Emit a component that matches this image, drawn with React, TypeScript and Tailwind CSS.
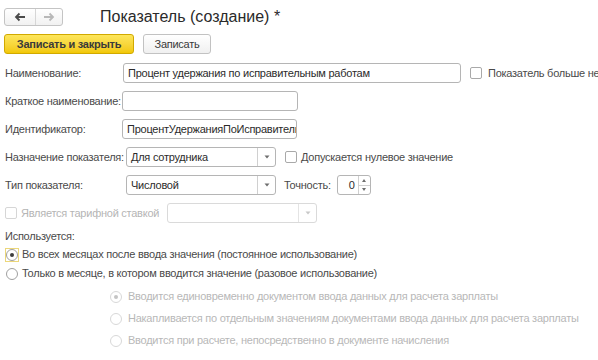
import React from "react";

const font = { fontFamily: '"Liberation Sans", Arial, sans-serif' };

function Arrow({ dir, color }: { dir: "left" | "right"; color: string }) {
    return (
        <svg width="12" height="10" viewBox="0 0 12 10">
            {dir === "left" ? (
                <path d="M11 5H2M5.5 1.5L2 5l3.5 3.5" stroke={color} strokeWidth="1.8" fill="none" />
            ) : (
                <path d="M1 5h9M6.5 1.5L10 5 6.5 8.5" stroke={color} strokeWidth="1.8" fill="none" />
            )}
        </svg>
    );
}

function Checkbox({ disabled }: { disabled?: boolean }) {
    return (
        <span
            className={
                "inline-block w-[12px] h-[12px] rounded-[2px] border bg-white shrink-0 " +
                (disabled ? "border-[#d6d6d6]" : "border-[#a9a9a9]")
            }
        />
    );
}

function Radio({ checked, disabled }: { checked?: boolean; disabled?: boolean }) {
    return (
        <span
            className={
                "flex items-center justify-center w-[12px] h-[12px] rounded-full border bg-white shrink-0 " +
                (disabled ? "border-[#d8d8d8]" : "border-[#a0a0a0]")
            }
        >
            {checked && (
                <span className={"w-[4px] h-[4px] rounded-full " + (disabled ? "bg-[#c4c4c4]" : "bg-[#3d3d3d]")} />
            )}
        </span>
    );
}

function Select({ value, width, disabled }: { value: string; width: string; disabled?: boolean }) {
    return (
        <div
            className={
                "flex h-[20px] rounded-[3px] border bg-white shrink-0 " +
                width +
                (disabled ? " border-[#dadada]" : " border-[#b5b5b5]")
            }
        >
            <div className="flex-1 pl-[4px] flex items-center text-[#2b2b2b] overflow-hidden whitespace-nowrap">
                {value}
            </div>
            <div
                className={
                    "w-[18px] flex items-center justify-center border-l " +
                    (disabled ? "border-[#e4e4e4]" : "border-[#d0d0d0]")
                }
            >
                <svg width="6" height="4" viewBox="0 0 6 4">
                    <path d="M0.5 0.5h5L3 3.5z" fill={disabled ? "#c8c8c8" : "#6e6e6e"} />
                </svg>
            </div>
        </div>
    );
}

export default function App() {
    return (
        <div
            className="w-[598px] h-[360px] bg-white overflow-hidden text-[11px] tracking-[-0.25px] text-[#4a4a4a]"
            style={font}
        >
            {/* Header */}
            <div className="flex items-center pt-[8px] pl-[4px] h-[26px]">
                <div className="flex h-[18px] w-[59px] rounded-[3px] border border-[#c4c4c4] bg-gradient-to-b from-white to-[#f1f1f1]">
                    <div className="w-[31px] flex items-center justify-center border-r border-[#d6d6d6]">
                        <Arrow dir="left" color="#4a4a4a" />
                    </div>
                    <div className="flex-1 flex items-center justify-center">
                        <Arrow dir="right" color="#b8b8b8" />
                    </div>
                </div>
                <div className="ml-[37px] text-[16px] tracking-normal text-[#2a2a2a] leading-none">
                    Показатель (создание) *
                </div>
            </div>

            {/* Command bar */}
            <div className="flex items-center pl-[4px] mt-[8px] h-[20px]">
                <button className="h-[20px] w-[130px] rounded-[3px] border border-[#d1a900] bg-gradient-to-b from-[#fde65a] to-[#f2c800] text-[11px] font-bold text-[#3a3a3a] leading-none">
                    Записать и закрыть
                </button>
                <button className="ml-[9px] h-[20px] w-[68px] rounded-[3px] border border-[#c2c2c2] bg-gradient-to-b from-white to-[#f0f0f0] text-[11px] text-[#3a3a3a] leading-none">
                    Записать
                </button>
            </div>

            {/* Fields */}
            <div className="pl-[5px] mt-[9px] flex flex-col gap-[8px]">
                <div className="flex items-center h-[20px]">
                    <div className="w-[118px] shrink-0">Наименование:</div>
                    <div className="w-[338px] shrink-0 h-[20px] rounded-[3px] border border-[#b5b5b5] flex items-center pl-[4px] text-[#2b2b2b] whitespace-nowrap">
                        Процент удержания по исправительным работам
                    </div>
                    <div className="ml-[9px] flex items-center gap-[6px] whitespace-nowrap">
                        <Checkbox />
                        <span>Показатель больше не используется</span>
                    </div>
                </div>

                <div className="flex items-center h-[20px]">
                    <div className="w-[117px] shrink-0 whitespace-nowrap">Краткое наименование:</div>
                    <div className="w-[176px] shrink-0 h-[20px] rounded-[3px] border border-[#b5b5b5]" />
                </div>

                <div className="flex items-center h-[20px]">
                    <div className="w-[117px] shrink-0">Идентификатор:</div>
                    <div className="w-[175px] shrink-0 h-[20px] rounded-[3px] border border-[#b5b5b5] flex items-center pl-[4px] text-[#2b2b2b] whitespace-nowrap overflow-hidden">
                        ПроцентУдержанияПоИсправительным
                    </div>
                </div>

                <div className="flex items-center h-[20px]">
                    <div className="w-[121px] shrink-0 whitespace-nowrap">Назначение показателя:</div>
                    <Select value="Для сотрудника" width="w-[150px]" />
                    <div className="ml-[9px] flex items-center gap-[4px] whitespace-nowrap">
                        <Checkbox />
                        <span>Допускается нулевое значение</span>
                    </div>
                </div>

                <div className="flex items-center h-[20px]">
                    <div className="w-[121px] shrink-0">Тип показателя:</div>
                    <Select value="Числовой" width="w-[150px]" />
                    <div className="ml-[8px]">Точность:</div>
                    <div className="ml-[6px] flex h-[20px] w-[34px] rounded-[3px] border border-[#b5b5b5]">
                        <div className="flex-1 flex items-center justify-end pr-[3px] text-[#2b2b2b]">0</div>
                        <div className="w-[12px] border-l border-[#d0d0d0] flex flex-col">
                            <div className="flex-1 flex items-center justify-center border-b border-[#d0d0d0]">
                                <svg width="4" height="3" viewBox="0 0 4 3">
                                    <path d="M0 3h4L2 0z" fill="#6e6e6e" />
                                </svg>
                            </div>
                            <div className="flex-1 flex items-center justify-center">
                                <svg width="4" height="3" viewBox="0 0 4 3">
                                    <path d="M0 0h4L2 3z" fill="#6e6e6e" />
                                </svg>
                            </div>
                        </div>
                    </div>
                </div>

                <div className="flex items-center h-[20px]">
                    <div className="w-[162px] shrink-0 flex items-center gap-[4px] text-[#b5b5b5] whitespace-nowrap">
                        <Checkbox disabled />
                        <span>Является тарифной ставкой</span>
                    </div>
                    <Select value="" width="w-[150px]" disabled />
                </div>
            </div>

            {/* Usage */}
            <div className="pl-[5px] mt-[6px]">
                <div className="h-[15px] leading-[15px]">Используется:</div>
                <div className="mt-[3px] flex items-center h-[15px]">
                    <div className="w-[14px] h-[14px] border border-[#ecd77a] flex items-center justify-center">
                        <Radio checked />
                    </div>
                    <span className="ml-[3px] whitespace-nowrap">
                        Во всех месяцах после ввода значения (постоянное использование)
                    </span>
                </div>
                <div className="mt-[4px] flex items-center h-[15px] pl-[1px]">
                    <Radio />
                    <span className="ml-[4px] whitespace-nowrap">
                        Только в месяце, в котором вводится значение (разовое использование)
                    </span>
                </div>

                <div className="pl-[105px] mt-[8px] flex flex-col gap-[7px] text-[#b8b8b8]">
                    <div className="flex items-center h-[15px]">
                        <Radio checked disabled />
                        <span className="ml-[6px] whitespace-nowrap">
                            Вводится единовременно документом ввода данных для расчета зарплаты
                        </span>
                    </div>
                    <div className="flex items-center h-[15px]">
                        <Radio disabled />
                        <span className="ml-[6px] whitespace-nowrap">
                            Накапливается по отдельным значениям документами ввода данных для расчета зарплаты
                        </span>
                    </div>
                    <div className="flex items-center h-[15px]">
                        <Radio disabled />
                        <span className="ml-[6px] whitespace-nowrap">
                            Вводится при расчете, непосредственно в документе начисления
                        </span>
                    </div>
                </div>
            </div>
        </div>
    );
}
